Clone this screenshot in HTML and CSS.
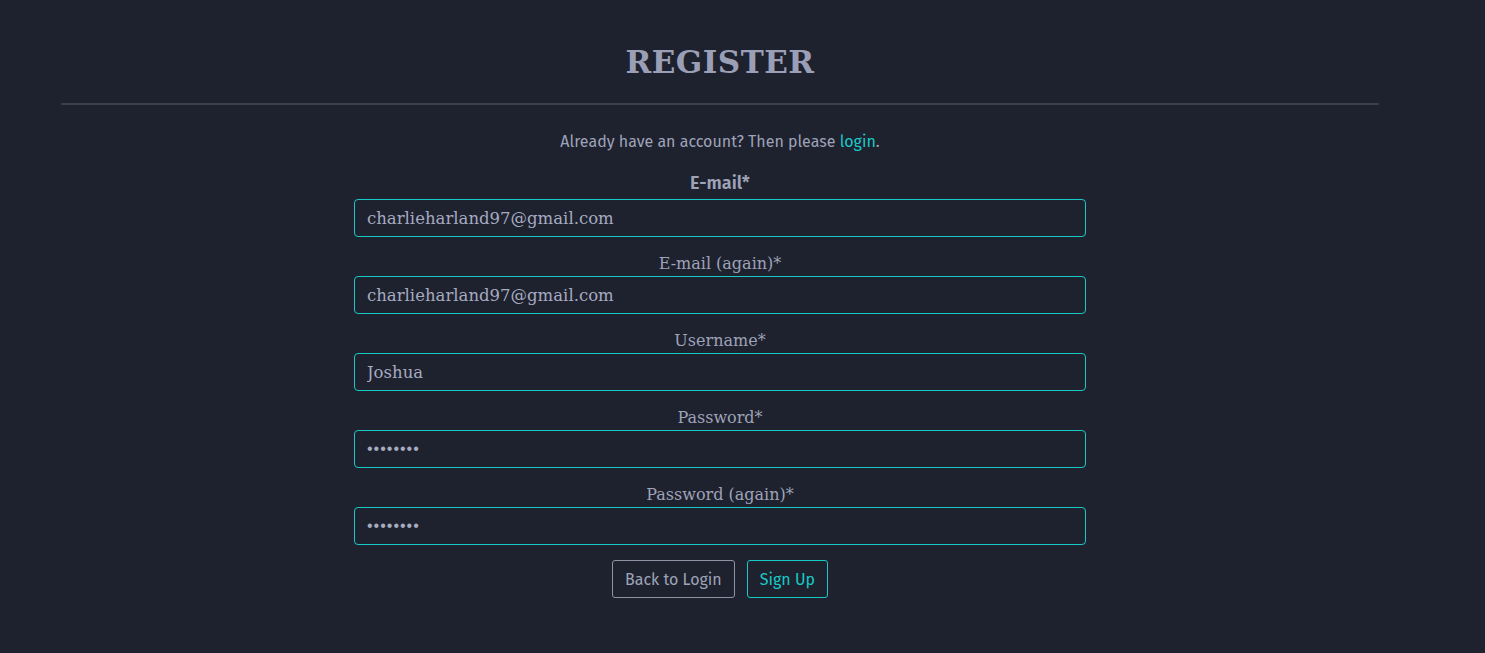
FILE: index.html
```html
<!DOCTYPE html>
<html lang="en">
<head>
<meta charset="utf-8">
<title>Register</title>
<link rel="stylesheet" href="styles.css">
</head>
<body>
<main class="page">
  <h1 class="title">REGISTER</h1>
  <hr class="rule">
  <p class="intro">Already have an account? Then please <a href="#" class="link">login</a>.</p>
  <form class="form">
    <label class="label label-main">E-mail*</label>
    <input class="field" type="text" value="charlieharland97@gmail.com">
    <label class="label">E-mail (again)*</label>
    <input class="field" type="text" value="charlieharland97@gmail.com">
    <label class="label">Username*</label>
    <input class="field" type="text" value="Joshua">
    <label class="label">Password*</label>
    <input class="field field-pw" type="password" value="password">
    <label class="label">Password (again)*</label>
    <input class="field field-pw" type="password" value="password">
    <div class="actions">
      <button type="button" class="btn btn-muted">Back to Login</button>
      <button type="button" class="btn btn-accent">Sign Up</button>
    </div>
  </form>
</main>
</body>
</html>
```
FILE: styles.css
```css
html, body {
  margin: 0;
  padding: 0;
  background: #1e212e;
  height: 100%;
}
body {
  font-family: "Fira Sans", "Open Sans", "Noto Sans", sans-serif;
  color: #9ea3b8;
}
.page {
  width: 1440px;
  padding-top: 40px;
  display: flex;
  flex-direction: column;
  align-items: center;
}
.title {
  margin: 0;
  font-family: "DejaVu Serif", "Liberation Serif", serif;
  font-weight: bold;
  font-size: 31px;
  letter-spacing: 0.5px;
  line-height: 44px;
  color: #9a9fb6;
}
.rule {
  align-self: stretch;
  margin: 19px 61px 0 61px;
  border: 0;
  height: 2px;
  background: #3d404b;
}
.intro {
  margin: 27px 0 0 0;
  font-size: 16px;
  line-height: 20px;
}
.link {
  color: #19c9c6;
  text-decoration: none;
}
.form {
  width: 732px;
  display: flex;
  flex-direction: column;
  align-items: center;
  margin-top: 11px;
}
.label {
  font-family: "DejaVu Serif", "Liberation Serif", serif;
  font-size: 16px;
  line-height: 20px;
  margin-top: 17px;
  margin-bottom: 2px;
  color: #9ea3b8;
}
.label-main {
  font-family: "Fira Sans", "Open Sans", "Noto Sans", sans-serif;
  font-weight: 600;
  font-size: 18px;
  line-height: 22px;
  margin-top: 9px;
  margin-bottom: 5px;
}
.field {
  box-sizing: border-box;
  width: 732px;
  height: 38px;
  margin: 0;
  padding: 0 12px;
  background: transparent;
  border: 1px solid #18c9c6;
  border-radius: 4px;
  font-family: "DejaVu Serif", "Liberation Serif", serif;
  font-size: 16.5px;
  color: #a6abc0;
  outline: none;
}
.field-pw {
  font-family: "Liberation Sans", sans-serif;
  font-size: 16px;
  letter-spacing: 1px;
}
.actions {
  display: flex;
  gap: 12px;
  margin-top: 15px;
}
.btn {
  box-sizing: border-box;
  height: 38px;
  padding: 0 12px;
  background: transparent;
  border-radius: 3px;
  font-family: "Fira Sans", "Open Sans", "Noto Sans", sans-serif;
  font-size: 16px;
  cursor: pointer;
}
.btn-muted {
  border: 1px solid #8e93a6;
  color: #9ea3b8;
}
.btn-accent {
  border: 1px solid #18c9c6;
  color: #19c9c6;
}
```
